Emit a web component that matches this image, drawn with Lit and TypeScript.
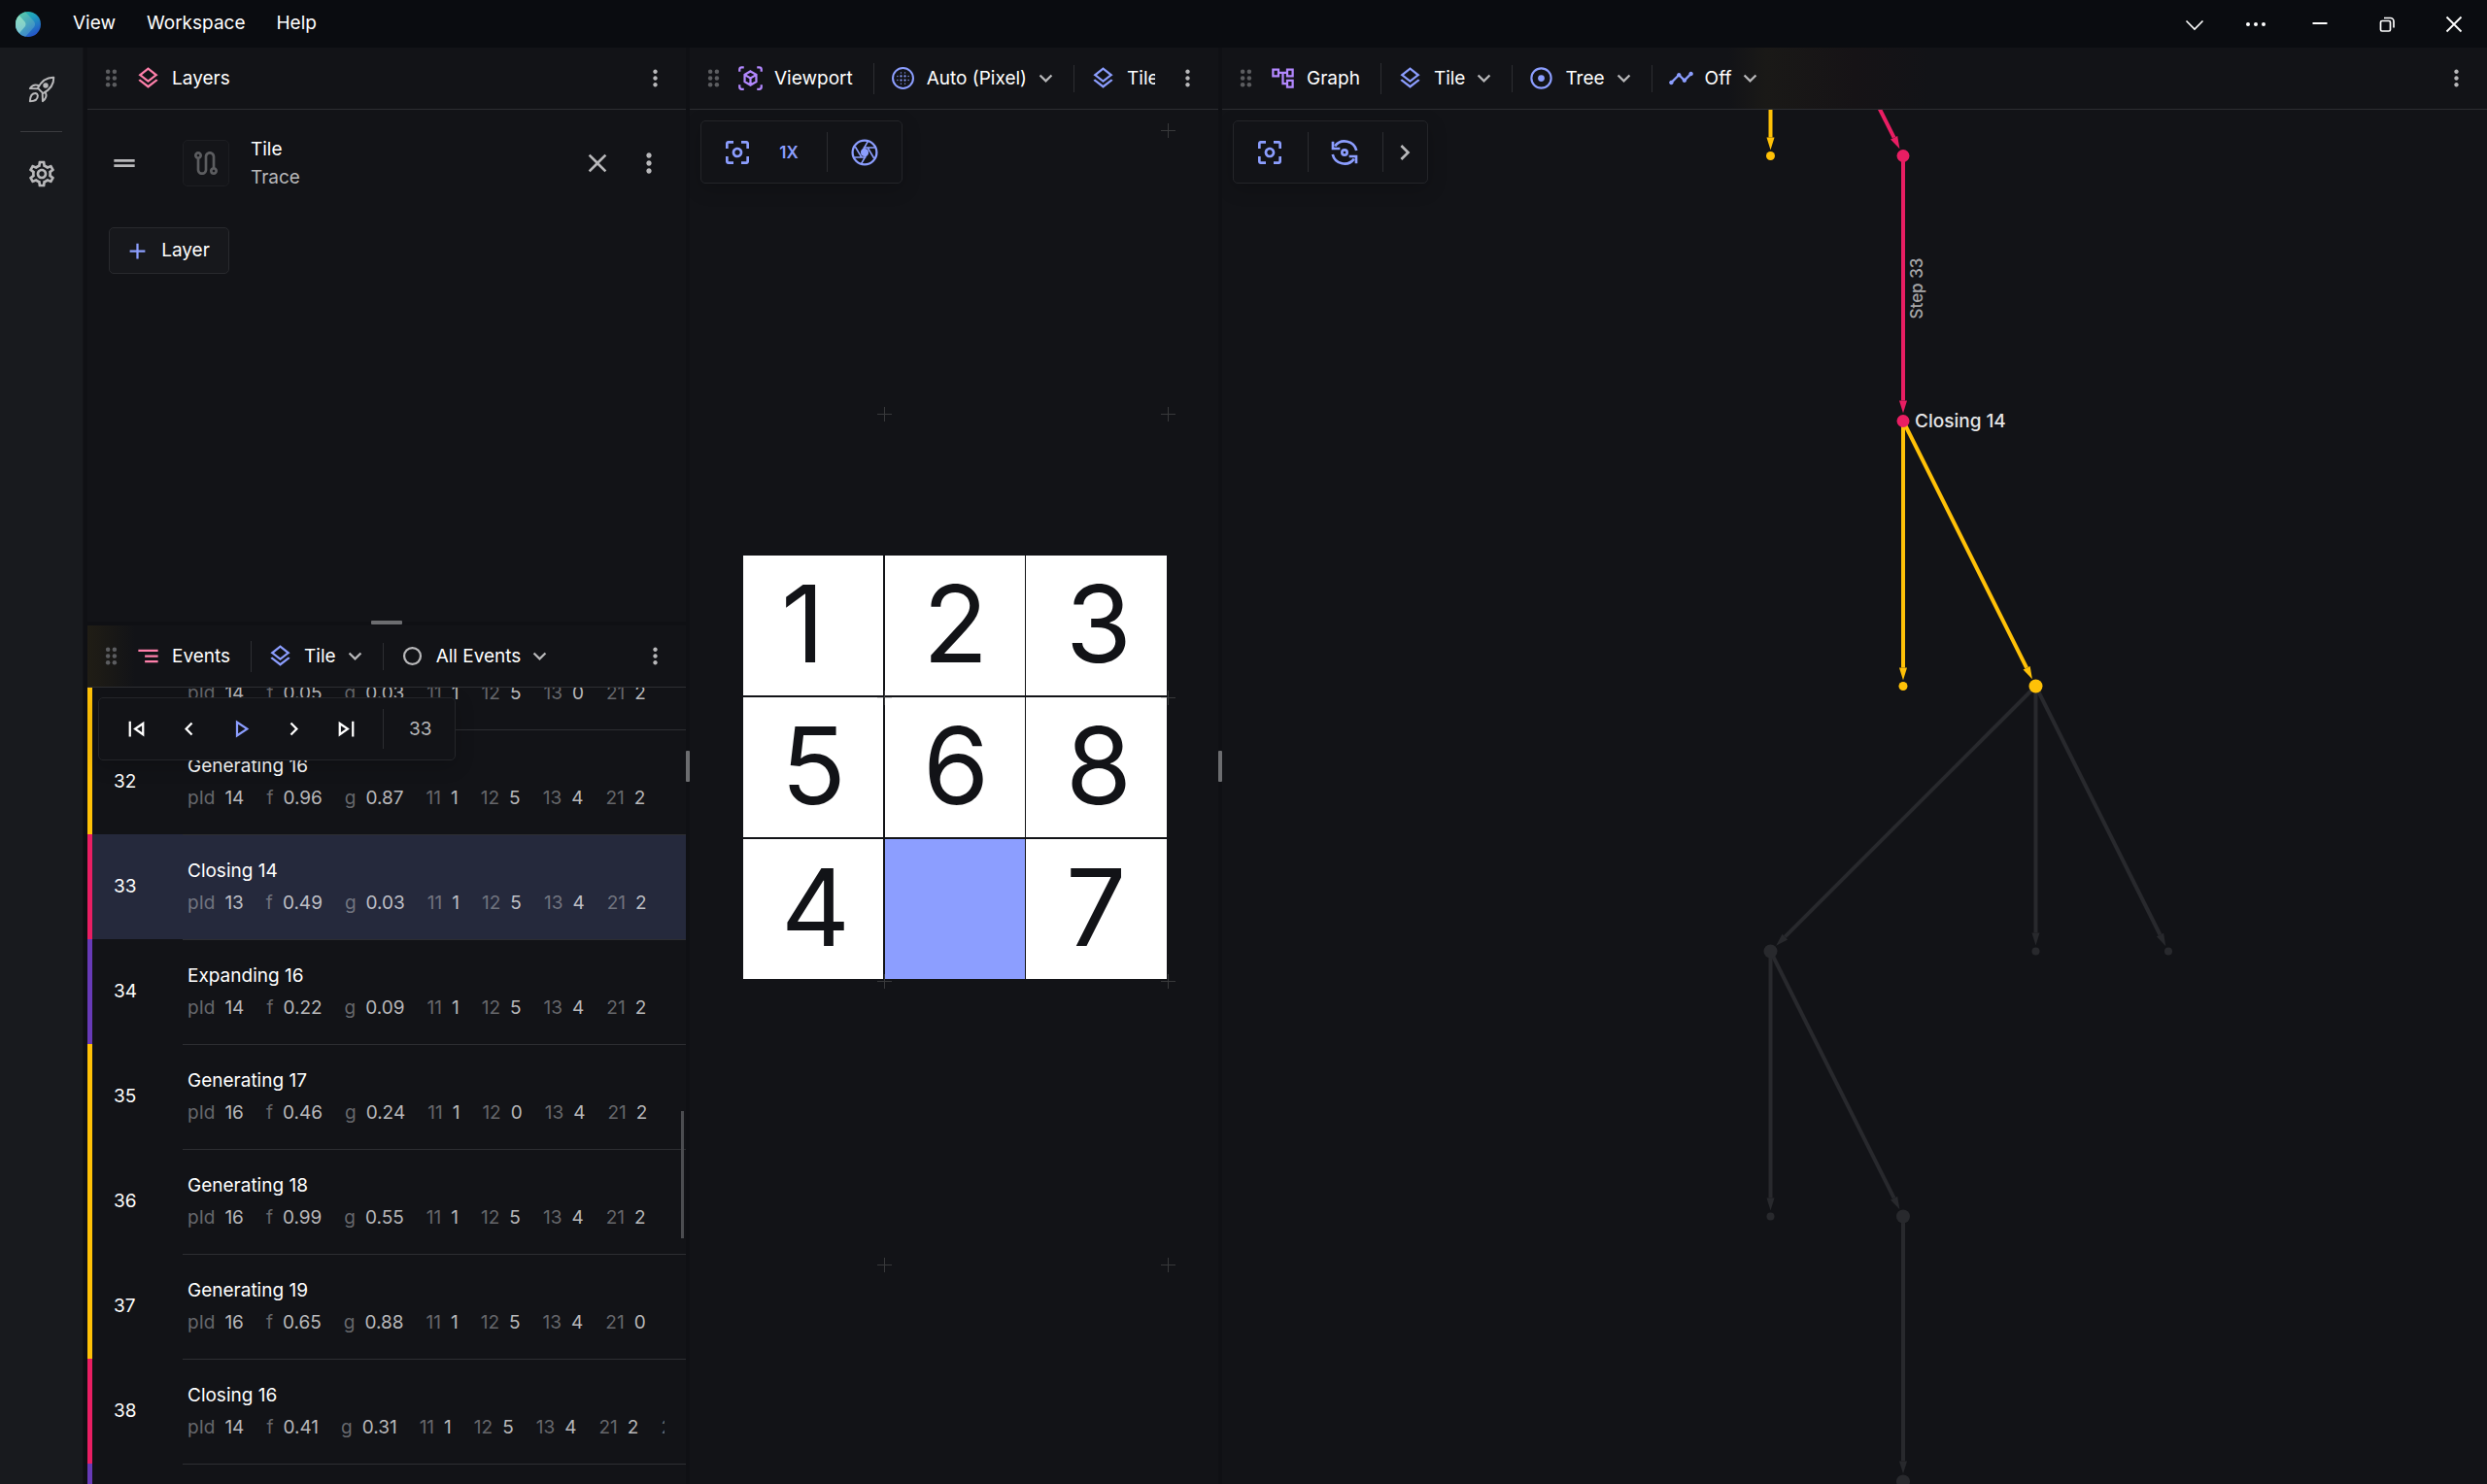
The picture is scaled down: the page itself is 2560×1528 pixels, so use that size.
import { LitElement, html, css, svg, nothing } from "lit";
import { customElement, property } from "lit/decorators.js";

const icons: Record<string, unknown> = {
  drag: svg`<g fill="currentColor"><circle cx="9" cy="6" r="2"/><circle cx="15" cy="6" r="2"/><circle cx="9" cy="12" r="2"/><circle cx="15" cy="12" r="2"/><circle cx="9" cy="18" r="2"/><circle cx="15" cy="18" r="2"/></g>`,
  more: svg`<path fill="currentColor" d="M12 8c1.100 0 2-.9 2-2s-.9-2-2-2-2 .9-2 2 .9 2 2 2zm0 2c-1.100 0-2 .9-2 2s.9 2 2 2 2-.9 2-2-.9-2-2-2zm0 6c-1.100 0-2 .9-2 2s.9 2 2 2 2-.9 2-2-.9-2-2-2z"/>`,
  layers: svg`<path fill="currentColor" d="M12 18.540l-7.370-5.730L3 14.070l9 7 9-7-1.630-1.270L12 18.540zM12 16l7.360-5.730L21 9l-9-7-9 7 1.630 1.270L12 16zm0-11.470L17.740 9 12 13.470 6.260 9 12 4.530z"/>`,
  chevron: svg`<path fill="currentColor" d="M7.410 8.590 12 13.170l4.590-4.580L18 10l-6 6-6-6z"/>`,
  next: svg`<path fill="currentColor" d="M10 6 8.590 7.410 13.170 12l-4.580 4.590L10 18l6-6z"/>`,
  prev: svg`<path fill="currentColor" d="M15.410 7.410 14 6l-6 6 6 6 1.410-1.410L10.830 12z"/>`,
  plus: svg`<path fill="currentColor" d="M19 13h-6v6h-2v-6H5v-2h6V5h2v6h6z"/>`,
  close: svg`<path fill="currentColor" d="M19 6.410 17.590 5 12 10.590 6.410 5 5 6.410 10.590 12 5 17.590 6.410 19 12 13.410 17.590 19 19 17.590 13.410 12z"/>`,
  handle: svg`<path fill="currentColor" d="M20 9H4v2h16V9zM4 15h16v-2H4v2z"/>`,
  route: svg`<path fill="currentColor" d="M19 15.180V7c0-2.210-1.790-4-4-4s-4 1.790-4 4v10c0 1.100-.9 2-2 2s-2-.9-2-2V8.820C8.160 8.400 9 7.300 9 6c0-1.660-1.340-3-3-3S3 4.340 3 6c0 1.300.84 2.400 2 2.820V17c0 2.210 1.790 4 4 4s4-1.790 4-4V7c0-1.100.9-2 2-2s2 .9 2 2v8.180A2.996 2.996 0 0 0 18 21c1.660 0 3-1.340 3-3 0-1.300-.84-2.400-2-2.820zM6 7c-.55 0-1-.45-1-1s.45-1 1-1 1 .45 1 1-.45 1-1 1zm12 12c-.55 0-1-.45-1-1s.45-1 1-1 1 .45 1 1-.45 1-1 1z"/>`,
  segment: svg`<path fill="currentColor" d="M9 18h12v-2H9v2zM3 6v2h18V6H3zm6 7h12v-2H9v2z"/>`,
  ring: svg`<circle cx="12" cy="12" r="7.500" fill="none" stroke="currentColor" stroke-width="2"/>`,
  pixel: svg`<circle cx="12" cy="12" r="9.300" fill="none" stroke="currentColor" stroke-width="1.800"/><g fill="currentColor"><circle cx="10.200" cy="10.200" r="1"/><circle cx="13.800" cy="10.200" r="1"/><circle cx="10.200" cy="13.800" r="1"/><circle cx="13.800" cy="13.800" r="1"/><circle cx="10.200" cy="7" r=".6"/><circle cx="13.800" cy="7" r=".6"/><circle cx="10.200" cy="17" r=".6"/><circle cx="13.800" cy="17" r=".6"/><circle cx="7" cy="10.200" r=".6"/><circle cx="7" cy="13.800" r=".6"/><circle cx="17" cy="10.200" r=".6"/><circle cx="17" cy="13.800" r=".6"/></g>`,
  target: svg`<circle cx="12" cy="12" r="9" fill="none" stroke="currentColor" stroke-width="1.900"/><circle cx="12" cy="12" r="3" fill="currentColor"/>`,
  cube: svg`<g fill="none" stroke="currentColor" stroke-width="2"><path d="M2 6V4a2 2 0 0 1 2-2h2M18 2h2a2 2 0 0 1 2 2v2M22 18v2a2 2 0 0 1-2 2h-2M6 22H4a2 2 0 0 1-2-2v-2"/><path d="M12 5.700l5.300 3.100v6.400L12 18.300l-5.300-3.100V8.800zM6.900 9 12 12l5.100-3M12 12v6.300"/></g>`,
  tree: svg`<path fill="currentColor" d="M22 11V3h-7v3H9V3H2v8h7V8h2v10h4v3h7v-8h-7v3h-2V8h2v3h7zM7 9H4V5h3v4zm10 6h3v4h-3v-4zm0-10h3v4h-3V5z"/>`,
  line: svg`<path fill="currentColor" d="M23 8c0 1.100-.9 2-2 2-.18 0-.35-.02-.51-.07l-3.560 3.550c.05.160.07.340.07.520 0 1.100-.9 2-2 2s-2-.9-2-2c0-.18.02-.36.07-.52l-2.550-2.550c-.16.05-.34.07-.52.07s-.36-.02-.52-.07l-4.550 4.560c.05.160.07.330.07.510 0 1.100-.9 2-2 2s-2-.9-2-2 .9-2 2-2c.18 0 .35.02.51.07l4.560-4.550C8.020 9.360 8 9.180 8 9c0-1.100.9-2 2-2s2 .9 2 2c0 .18-.02.36-.07.520l2.550 2.550c.16-.05.34-.07.52-.07s.36.02.52.07l3.550-3.560C19.020 8.350 19 8.180 19 8c0-1.100.9-2 2-2s2 .9 2 2z"/>`,
  focus: svg`<path fill="currentColor" d="M5 15H3v4c0 1.100.9 2 2 2h4v-2H5v-4zM5 5h4V3H5c-1.100 0-2 .9-2 2v4h2V5zm14-2h-4v2h4v4h2V5c0-1.100-.9-2-2-2zm0 16h-4v2h4c1.100 0 2-.9 2-2v-4h-2v4zM12 8c-2.210 0-4 1.790-4 4s1.790 4 4 4 4-1.790 4-4-1.790-4-4-4zm0 6c-1.100 0-2-.9-2-2s.9-2 2-2 2 .9 2 2-.9 2-2 2z"/>`,
  shutter: svg`<circle cx="12" cy="12" r="9.300" fill="none" stroke="currentColor" stroke-width="1.700"/><path d="M14.500 3.500 9.600 12M20 8.300h-9M19.300 16.500 14.400 8.300M9.500 20.500l4.900-8.500M4 15.700h9M4.700 7.500l4.900 8.200" fill="none" stroke="currentColor" stroke-width="1.200"/><circle cx="12" cy="12" r="3" fill="currentColor"/>`,
  sync: svg`<g fill="none" stroke="currentColor" stroke-width="2"><path d="M21.200 10.500A9.400 9.400 0 0 0 4.600 7M2.800 13.500A9.400 9.400 0 0 0 19.400 17"/><path d="M3 3.500V9h5.500M21 20.500V15h-5.500"/><circle cx="12" cy="12" r="2"/></g>`,
  first: svg`<path fill="currentColor" d="M5 5h2v14H5zM19 5v14L9 12zm-2 4-4.500 3 4.500 3z"/>`,
  last: svg`<path fill="currentColor" d="M17 5h2v14h-2zM5 5v14l10-7zm2 4 4.500 3L7 15z"/>`,
  play: svg`<path fill="currentColor" d="M7 4v16l12-8zm2 3.700L15.500 12 9 16.300z"/>`,
  rocket: svg`<g fill="none" stroke="currentColor" stroke-width="1.500" stroke-linejoin="round"><path d="M21.200 2.800c-5.400-.2-9.300 2.600-12.300 8.200l4.100 4.100c5.600-3 8.400-6.900 8.200-12.300zM9.800 9.200C7 8 4.600 8.800 2.900 11.300l6 .2M14.800 14.200c1.200 2.800.4 5.200-2.100 6.900l-.2-6M7.300 15c-2.800 0-4.300 2-4.400 6.200 4.200-.1 6-1.600 6-4.400-.2-1-.7-1.600-1.600-1.800z"/><circle cx="15" cy="9" r="1.300" fill="currentColor"/></g>`,
  gear: svg`<path fill="currentColor" d="M19.430 12.980c.04-.32.07-.64.07-.98 0-.34-.03-.66-.07-.98l2.110-1.650c.19-.15.24-.42.12-.64l-2-3.460c-.09-.16-.26-.25-.44-.25-.06 0-.12.01-.17.03l-2.490 1c-.52-.4-1.080-.73-1.690-.98l-.38-2.650C14.460 2.180 14.250 2 14 2h-4c-.25 0-.46.18-.49.42l-.38 2.650c-.61.25-1.170.59-1.690.98l-2.490-1c-.06-.02-.12-.03-.18-.03-.17 0-.34.09-.43.25l-2 3.460c-.13.22-.07.49.12.64l2.110 1.650c-.04.32-.07.65-.07.98 0 .33.03.66.07.98l-2.110 1.650c-.19.15-.24.42-.12.64l2 3.460c.09.16.26.25.44.25.06 0 .12-.01.17-.03l2.490-1c.52.4 1.080.73 1.690.98l.38 2.650c.03.24.24.42.49.42h4c.25 0 .46-.18.49-.42l.38-2.650c.61-.25 1.170-.59 1.690-.98l2.490 1c.06.02.12.03.18.03.17 0 .34-.09.43-.25l2-3.460c.12-.22.07-.49-.12-.64l-2.110-1.650zm-1.980-1.710c.04.310.05.520.05.730 0 .210-.02.430-.05.730l-.14 1.130.89.7 1.080.84-.7 1.210-1.270-.51-1.040-.42-.9.680c-.43.320-.84.560-1.250.730l-1.060.43-.16 1.130-.2 1.350h-1.400l-.19-1.350-.16-1.130-1.060-.43c-.43-.18-.83-.41-1.230-.71l-.91-.7-1.060.43-1.270.51-.7-1.210 1.080-.84.89-.7-.14-1.130c-.03-.31-.05-.54-.05-.74s.02-.43.05-.73l.14-1.130-.89-.7-1.080-.84.7-1.210 1.270.51 1.040.42.9-.68c.43-.32.84-.56 1.250-.73l1.060-.43.16-1.130.2-1.350h1.390l.19 1.350.16 1.130 1.060.43c.43.180.83.410 1.230.710l.91.7 1.060-.43 1.270-.51.7 1.210-1.070.85-.89.7.14 1.130zM12 8c-2.210 0-4 1.790-4 4s1.790 4 4 4 4-1.790 4-4-1.790-4-4-4zm0 6c-1.100 0-2-.9-2-2s.9-2 2-2 2 .9 2 2-.9 2-2 2z"/>`,
  winDown: svg`<path d="M3.500 8.500l8.500 8.500 8.500-8.500" fill="none" stroke="currentColor" stroke-width="1.600"/>`,
  winMore: svg`<g fill="currentColor"><circle cx="4" cy="12" r="2"/><circle cx="12" cy="12" r="2"/><circle cx="20" cy="12" r="2"/></g>`,
  winMin: svg`<path d="M4.500 11h15" stroke="currentColor" stroke-width="2"/>`,
  winMax: svg`<g fill="none" stroke="currentColor" stroke-width="1.700"><rect x="5.500" y="8.500" width="10" height="10.500" rx="1.500"/><path d="M9 5.500h6.500A3.500 3.500 0 0 1 19 9v6.500"/></g>`,
  winClose: svg`<path d="M4.500 4.500l15 15M19.500 4.500l-15 15" stroke="currentColor" stroke-width="1.800"/>`,
};

@customElement("ui-icon")
export class UiIcon extends LitElement {
  @property() name = "";
  @property({ type: Number }) size = 27;
  static styles = css`
    :host { display: inline-flex; flex: none; }
    svg { display: block; }
  `;
  render() {
    return html`<svg width=${this.size} height=${this.size} viewBox="0 0 24 24" aria-hidden="true">${icons[this.name]}</svg>`;
  }
}

const control = css`
  * { box-sizing: border-box; }
  button {
    display: inline-flex; align-items: center; justify-content: center;
    margin: 0; padding: 0; border: 0; background: none; color: inherit;
    font: inherit; white-space: nowrap; cursor: pointer;
  }
  .blue { color: #8c9eff; }
  .pink { color: #ff80ab; }
  .purple { color: #b388ff; }
  .dim { color: #b8b8ba; }
  .faint { color: #5c5d60; }
  .toolbar {
    position: absolute; top: 11px; left: 11px; z-index: 2;
    display: flex; align-items: center; height: 65px;
    background: #121317; border: 1px solid #242529; border-radius: 5px;
    box-shadow: 0 5px 20px #0003;
  }
  .rule { flex: none; width: 1px; height: 41px; background: #2b2c30; }
`;

type Picker = { icon: string; tone: string; label: string };

@customElement("panel-header")
export class PanelHeader extends LitElement {
  @property() icon = "";
  @property() tone = "";
  @property() label = "";
  @property({ attribute: false }) pickers: Picker[] = [];
  static styles = [control, css`
    :host { display: flex; align-items: center; height: 64px; padding: 0 18px 0 11px; border-bottom: 1px solid #2d2e32; }
    .title { display: flex; align-items: center; gap: 11px; margin-left: 11px; margin-right: 21px; }
    .items { display: flex; align-items: center; flex: 1; min-width: 0; overflow: hidden; }
    .sep { flex: none; width: 1px; height: 28px; background: #2d2e32; }
    .sep.tall { height: 32px; }
    .picker { gap: 11px; padding: 0 15px 0 16px; height: 40px; flex: none; }
    .arrow { margin-left: -5px; }
    .actions { margin-left: 20px; }
  `];
  render() {
    return html`
      <ui-icon class="faint" name="drag"></ui-icon>
      <div class="items">
        <div class="title"><ui-icon class=${this.tone} name=${this.icon}></ui-icon><span>${this.label}</span></div>
        ${this.pickers.map((p, i) => html`
          <span class="sep ${i ? "" : "tall"}"></span>
          <button class="picker"><ui-icon class=${p.tone} name=${p.icon}></ui-icon><span>${p.label}</span><ui-icon class="arrow dim" name="chevron"></ui-icon></button>
        `)}
      </div>
      <button class="actions dim" aria-label="${this.label} options"><ui-icon name="more"></ui-icon></button>
    `;
  }
}

type Row = { step?: number; title?: string; kind: string; values?: string[] };
const keys = ["pId", "f", "g", "11", "12", "13", "21", "22"];
const rows: Row[] = [
  { kind: "generating", values: ["14", "0.05", "0.03", "1", "5", "0", "2"] },
  { step: 32, title: "Generating 16", kind: "generating", values: ["14", "0.96", "0.87", "1", "5", "4", "2"] },
  { step: 33, title: "Closing 14", kind: "closing", values: ["13", "0.49", "0.03", "1", "5", "4", "2"] },
  { step: 34, title: "Expanding 16", kind: "expanding", values: ["14", "0.22", "0.09", "1", "5", "4", "2"] },
  { step: 35, title: "Generating 17", kind: "generating", values: ["16", "0.46", "0.24", "1", "0", "4", "2"] },
  { step: 36, title: "Generating 18", kind: "generating", values: ["16", "0.99", "0.55", "1", "5", "4", "2"] },
  { step: 37, title: "Generating 19", kind: "generating", values: ["16", "0.65", "0.88", "1", "5", "4", "0"] },
  { step: 38, title: "Closing 16", kind: "closing", values: ["14", "0.41", "0.31", "1", "5", "4", "2", ""] },
  { kind: "expanding" },
];

@customElement("event-list")
export class EventList extends LitElement {
  @property({ type: Number }) current = 33;
  static styles = [control, css`
    :host { display: block; position: relative; flex: 1; min-height: 0; overflow: hidden; }
    .rows { display: flex; flex-direction: column; margin: -65px 0 0; padding: 0; list-style: none; }
    .row { display: grid; grid-template-columns: 98px minmax(0, 1fr); height: 108px; flex: none; border-left: 5px solid; align-items: center; }
    .row.generating { border-color: #ffc107; }
    .row.closing { border-color: #e91e63; }
    .row.expanding { border-color: #673ab7; }
    .row.current { background: #25293c; }
    .step { padding-left: 22px; }
    .body { height: 108px; margin-left: -5px; padding: 23px 22px 0 5px; border-top: 1px solid #2d2e32; }
    .body > * { height: 27px; line-height: 27px; }
    .values { display: flex; gap: 23px; margin-top: 6px; overflow: hidden; white-space: nowrap; }
    .pair { display: flex; gap: 10px; flex: none; color: #b8b8ba; }
    .key { color: #66676b; }
    .current .pair { color: #bebfc5; }
    .current .key { color: #71747f; }
    .playback { padding: 0 24px 0 11px; top: 10px; }
    .playback button { width: 54px; height: 48px; }
    .playback .rule { margin: 0 26px 0 11px; }
    .thumb { position: absolute; right: 2px; top: 436px; width: 3px; height: 131px; background: #4b4c50; }
  `];
  render() {
    const buttons = [["first", "First step", ""], ["prev", "Previous step", ""], ["play", "Play", "blue"], ["next", "Next step", ""], ["last", "Last step", ""]];
    return html`
      <ol class="rows">
        ${rows.map((r) => html`
          <li class="row ${r.kind} ${r.step === this.current ? "current" : ""}">
            <span class="step">${r.step}</span>
            <div class="body">
              <div>${r.title}</div>
              <div class="values">${(r.values ?? []).map((v, i) => html`<span class="pair"><span class="key">${keys[i]}</span><span>${v}</span></span>`)}</div>
            </div>
          </li>`)}
      </ol>
      <div class="toolbar playback">
        ${buttons.map(([icon, label, tone]) => html`<button class=${tone} aria-label=${label}><ui-icon name=${icon}></ui-icon></button>`)}
        <span class="rule"></span><span class="dim">${this.current}</span>
      </div>
      <span class="thumb"></span>
    `;
  }
}

const tiles = ["1", "2", "3", "5", "6", "8", "4", "", "7"];
const marks = [[492, 21], [200, 313], [492, 313], [200, 605], [492, 605], [200, 897], [492, 897], [200, 1189], [492, 1189]];

@customElement("tile-board")
export class TileBoard extends LitElement {
  static styles = css`
    :host { display: block; position: relative; flex: 1; min-height: 0; overflow: hidden; }
    svg { display: block; width: 100%; height: 100%; }
    text { font: 400 110px Inter, "Liberation Sans", sans-serif; fill: #121317; }
  `;
  render() {
    return html`
      <svg viewBox="0 0 544 1415" preserveAspectRatio="xMidYMid slice" role="img" aria-label="Tile board">
        ${tiles.map((t, i) => {
          const col = i % 3, line = Math.floor(i / 3);
          const x = [55, 201, 346][col], y = [459, 605, 751][line], start = [94, 240, 387][col];
          return svg`<rect x=${x} y=${y} width=${col === 2 ? 145 : 144} height="144" fill=${t ? "#ffffff" : "#8c9eff"}/>
            ${t ? svg`<text x=${start} y=${y + 110}>${t}</text>` : nothing}`;
        })}
        ${marks.map(([x, y]) => svg`<path d="M${x - 7} ${y + 0.5}h15M${x + 0.5} ${y - 7}v15" stroke="#808080" stroke-width="1" opacity=".35"/>`)}
      </svg>
      <slot></slot>
    `;
  }
}

/* Each link runs from (x1, y1) to (x2, y2) and stops a gap short of its node. */
type Link = [number, number, number, number, string, number];
const gold = "#ffc107", rose = "#e91e63", ash = "#28292d";
const links: Link[] = [
  [564.5, -225.5, 564.5, 47.5, gold, 6],
  [564.5, -225.5, 701, 47.5, rose, 8],
  [701, 47.5, 701, 320.5, rose, 8],
  [701, 320.5, 701, 593.5, gold, 6],
  [701, 320.5, 837.5, 593.5, gold, 8],
  [837.5, 593.5, 564.5, 866.5, ash, 8],
  [837.5, 593.5, 837.5, 866.5, ash, 6],
  [837.5, 593.5, 974, 866.5, ash, 6],
  [564.5, 866.5, 564.5, 1139.5, ash, 6],
  [564.5, 866.5, 701, 1139.5, ash, 8],
  [701, 1139.5, 701, 1412.5, ash, 8],
];
const nodes: [number, number, number, string][] = [
  [564.5, 47.5, 4.5, gold], [701, 47.5, 6.5, rose], [701, 320.5, 6.5, rose], [701, 593.5, 4.5, gold],
  [837.5, 593.5, 7, gold], [564.5, 866.5, 7, ash], [837.5, 866.5, 4, ash], [974, 866.5, 4, ash],
  [564.5, 1139.5, 4, ash], [701, 1139.5, 7, ash], [701, 1412.5, 7, ash],
];

@customElement("search-graph")
export class SearchGraph extends LitElement {
  static styles = css`
    :host { display: block; position: relative; flex: 1; min-height: 0; overflow: hidden; }
    svg { display: block; width: 100%; height: 100%; }
    .node { font: 500 19px Inter, "Liberation Sans", sans-serif; fill: #e4e4e6; }
    .edge { font: 500 17px Inter, "Liberation Sans", sans-serif; fill: #a6a6a8; text-anchor: middle; }
  `;
  link([x1, y1, x2, y2, color, gap]: Link) {
    const length = Math.hypot(x2 - x1, y2 - y1);
    const ux = (x2 - x1) / length, uy = (y2 - y1) / length;
    const tx = x2 - ux * gap, ty = y2 - uy * gap;
    const bx = tx - ux * 13, by = ty - uy * 13;
    return svg`<path d="M${x1} ${y1}L${bx} ${by}" stroke=${color} stroke-width="4"/>
      <path d="M${tx} ${ty}L${bx - uy * 4} ${by + ux * 4}L${bx + uy * 4} ${by - ux * 4}z" fill=${color}/>`;
  }
  render() {
    return html`
      <svg viewBox="0 0 1302 1415" preserveAspectRatio="xMidYMid slice" role="img" aria-label="Search tree">
        ${links.map((l) => this.link(l))}
        ${nodes.map(([x, y, r, c]) => svg`<circle cx=${x} cy=${y} r=${r} fill=${c}/>`)}
        <text class="node" x="713" y="327">Closing 14</text>
        <text class="edge" transform="translate(721 184) rotate(-90)">Step 33</text>
      </svg>
      <slot></slot>
    `;
  }
}

@customElement("app-root")
export class AppRoot extends LitElement {
  static styles = [control, css`
    :host {
      display: grid; grid-template-rows: 49px minmax(0, 1fr); height: 100vh;
      background: #0f1014; color: #fff; overflow: hidden;
      font: 400 19px/24px Inter, "Liberation Sans", sans-serif;
    }
    .titlebar { display: flex; align-items: center; padding-left: 16px; background: #0a0c10; }
    .logo { display: block; margin-right: 17px; }
    .menu { padding: 0 16px 2px; height: 49px; }
    .window { display: flex; margin-left: auto; }
    .window button { width: 69px; height: 49px; }
    .window .slim { width: 63px; }
    .main { display: grid; grid-template-columns: 86px minmax(0, 1fr); min-height: 0; }
    .side { display: flex; flex-direction: column; align-items: center; gap: 27px; padding-top: 27px; background: #181a1e; border-right: 1px solid #131418; }
    .side button { width: 48px; height: 32px; }
    .side .line { width: 43px; height: 1px; background: #3a3b3f; }
    .panels { display: grid; grid-template-columns: 616fr 544fr 1302fr; gap: 4px; padding-left: 4px; min-height: 0; }
    .column { display: grid; grid-template-rows: 591fr 884fr; gap: 4px; min-width: 0; min-height: 0; position: relative; }
    .panel { display: flex; flex-direction: column; min-width: 0; min-height: 0; position: relative; background: #121317; }
    .grip { position: absolute; z-index: 3; background: #6c6d70; border-radius: 1px; }
    .grip.v { width: 4px; height: 32px; right: -4px; top: calc(49% - 1px); }
    .grip.h { height: 4px; width: 32px; left: calc(50% - 16px); bottom: -3px; }
    .glow-left { background: linear-gradient(90deg, #201d15, #121317 8%); }
    .glow-mid { background: linear-gradient(90deg, #12131700 40%, #1a1917 43%, #161316 50%, #12131700 56%); }
    .layer { display: flex; align-items: center; padding: 31px 28px 0 22px; height: 79px; }
    .thumb { display: flex; align-items: center; justify-content: center; width: 48px; height: 48px; margin: 0 22px 0 44px; border: 1px solid #1d1e22; border-radius: 5px; color: #5c5d60; background: #141519; }
    .names { flex: 1; line-height: 29px; }
    .add { align-self: flex-start; margin: 42px 22px; padding-right: 4px; width: 124px; height: 48px; gap: 11px; border: 1px solid #292a2e; border-radius: 5px; background: #17181c; }
    .layer button { width: 54px; height: 48px; }
    .layer .last { width: 36px; margin-left: 8px; margin-right: -8px; }
    .view { padding: 0 11px 0 10px; }
    .view button { width: 54px; height: 48px; }
    .view .zoomtext { width: 52px; font-size: 17px; font-weight: 600; }
    .view .rule { margin: 0 11px 0 13px; }
    .view .rule.near { margin: 0 10px 0 12px; }
    .view .narrow { width: 24px; }
  `];
  render() {
    const tile = { icon: "layers", tone: "blue", label: "Tile" };
    return html`
      <header class="titlebar">
        <svg class="logo" width="26" height="26" viewBox="0 0 26 26" aria-hidden="true">
          <defs>
            <linearGradient id="a" x1="0" y1="0" x2=".6" y2="1"><stop offset="0" stop-color="#2fc4a0"/><stop offset=".45" stop-color="#1fa0c0"/><stop offset="1" stop-color="#2456c8"/></linearGradient>
            <linearGradient id="b" x1="0" y1="0" x2=".6" y2="1"><stop offset="0" stop-color="#5ad6a6"/><stop offset="1" stop-color="#3d86cc"/></linearGradient>
            <linearGradient id="d" x1="0" y1="0" x2="0" y2="1"><stop offset="0" stop-color="#8fe0be"/><stop offset="1" stop-color="#7cc4d4"/></linearGradient>
            <clipPath id="c"><circle cx="13" cy="13" r="13"/></clipPath>
          </defs>
          <g clip-path="url(#c)"><path fill="url(#a)" d="M0 0h26v26H0z"/><path fill="url(#b)" d="M0 0h10l9 10q2 3 0 6l-9 10H0z"/><path fill="url(#d)" d="M0 2l4 2 6 7q1 2 0 4l-6 7-4 2z"/></g>
        </svg>
        <button class="menu">View</button><button class="menu">Workspace</button><button class="menu">Help</button>
        <div class="window">
          <button class="slim" aria-label="Show menu"><ui-icon name="winDown" size="24"></ui-icon></button>
          <button class="slim" aria-label="More"><ui-icon name="winMore" size="24"></ui-icon></button>
          <button aria-label="Minimise"><ui-icon name="winMin" size="24"></ui-icon></button>
          <button aria-label="Restore"><ui-icon name="winMax" size="24"></ui-icon></button>
          <button aria-label="Close"><ui-icon name="winClose" size="24"></ui-icon></button>
        </div>
      </header>
      <div class="main">
        <nav class="side dim">
          <button aria-label="Explore"><ui-icon name="rocket" size="32"></ui-icon></button>
          <span class="line"></span>
          <button aria-label="Settings"><ui-icon name="gear" size="32"></ui-icon></button>
        </nav>
        <main class="panels">
          <div class="column">
            <section class="panel">
              <panel-header icon="layers" tone="pink" label="Layers"></panel-header>
              <div class="layer">
                <ui-icon class="dim" name="handle" size="32"></ui-icon>
                <span class="thumb"><ui-icon name="route" size="32"></ui-icon></span>
                <div class="names"><div>Tile</div><div class="dim">Trace</div></div>
                <button class="dim" aria-label="Remove layer"><ui-icon name="close" size="32"></ui-icon></button>
                <button class="dim last" aria-label="Layer options"><ui-icon name="more" size="32"></ui-icon></button>
              </div>
              <button class="add"><ui-icon class="blue" name="plus"></ui-icon>Layer</button>
              <span class="grip h"></span>
            </section>
            <section class="panel">
              <panel-header class="glow-left" icon="segment" tone="pink" label="Events" .pickers=${[tile, { icon: "ring", tone: "dim", label: "All Events" }]}></panel-header>
              <event-list></event-list>
            </section>
            <span class="grip v"></span>
          </div>
          <section class="panel">
            <panel-header icon="cube" tone="purple" label="Viewport" .pickers=${[{ icon: "pixel", tone: "blue", label: "Auto (Pixel)" }, tile]}></panel-header>
            <tile-board>
              <div class="toolbar view">
                <button class="blue" aria-label="Fit"><ui-icon name="focus" size="32"></ui-icon></button>
                <button class="blue zoomtext">1X</button>
                <span class="rule"></span>
                <button class="blue" aria-label="Capture"><ui-icon name="shutter" size="32"></ui-icon></button>
              </div>
            </tile-board>
            <span class="grip v"></span>
          </section>
          <section class="panel">
            <panel-header class="glow-mid" icon="tree" tone="purple" label="Graph" .pickers=${[tile, { icon: "target", tone: "blue", label: "Tree" }, { icon: "line", tone: "blue", label: "Off" }]}></panel-header>
            <search-graph>
              <div class="toolbar view">
                <button class="blue" aria-label="Fit"><ui-icon name="focus" size="32"></ui-icon></button>
                <span class="rule near"></span>
                <button class="blue" aria-label="Recalculate"><ui-icon name="sync" size="32"></ui-icon></button>
                <span class="rule near"></span>
                <button class="dim narrow" aria-label="Expand"><ui-icon name="next" size="32"></ui-icon></button>
              </div>
            </search-graph>
          </section>
        </main>
      </div>
    `;
  }
}
